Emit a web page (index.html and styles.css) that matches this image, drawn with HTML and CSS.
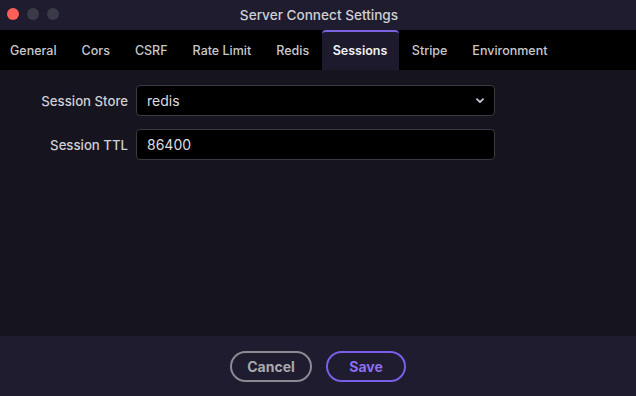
FILE: index.html
```html
<!DOCTYPE html>
<html>
<head>
<meta charset="utf-8">
<link rel="stylesheet" href="styles.css">
</head>
<body>
<div class="window">
  <div class="titlebar">
    <div class="lights">
      <span class="light red"></span>
      <span class="light grey"></span>
      <span class="light grey"></span>
    </div>
    <div class="title">Server Connect Settings</div>
  </div>
  <div class="tabs">
    <div class="tab">General</div>
    <div class="tab">Cors</div>
    <div class="tab">CSRF</div>
    <div class="tab">Rate Limit</div>
    <div class="tab">Redis</div>
    <div class="tab active">Sessions</div>
    <div class="tab">Stripe</div>
    <div class="tab">Environment</div>
  </div>
  <div class="content">
    <div class="form">
      <label class="label">Session Store</label>
      <div class="field select">
        <span>redis</span>
        <svg class="chev" width="8" height="6" viewBox="0 0 8 6"><path d="M1 1.2 L4 4.2 L7 1.2" fill="none" stroke="#c9cbe0" stroke-width="1.7" stroke-linecap="round" stroke-linejoin="round"/></svg>
      </div>
      <label class="label">Session TTL</label>
      <div class="field"><span>86400</span></div>
    </div>
  </div>
  <div class="footer">
    <button class="btn cancel">Cancel</button>
    <button class="btn save">Save</button>
  </div>
</div>
</body>
</html>
```
FILE: styles.css
```css
* { box-sizing: border-box; }
html, body { margin: 0; padding: 0; }
body {
  width: 636px;
  height: 396px;
  overflow: hidden;
  background: #15141f;
  font-family: Inter, "Noto Sans", sans-serif;
}
.window {
  display: flex;
  flex-direction: column;
  height: 396px;
}
.titlebar {
  height: 30px;
  background: #1e1c2e;
  position: relative;
  display: flex;
  align-items: center;
  justify-content: center;
}
.lights {
  position: absolute;
  left: 7px;
  top: 8px;
  display: flex;
  gap: 8px;
}
.light {
  width: 12px;
  height: 12px;
  border-radius: 50%;
  display: block;
}
.light.red { background: #fe5f57; }
.light.grey { background: #3b3a48; }
.title {
  color: #cfcfd4;
  font-size: 13.6px;
  font-weight: 500;
  margin-left: 2px;
}
.tabs {
  height: 40px;
  background: #000;
  display: flex;
  align-items: stretch;
  padding-left: 0;
}
.tab {
  color: #c8c8cc;
  font-size: 12.5px;
  font-weight: 500;
  padding: 0 12.5px 2px;
  display: flex;
  align-items: center;
  border-top: 2px solid transparent;
  border-radius: 4px 4px 0 0;
}
.tab:first-child { padding-left: 10px; }
.tab.active {
  background: #1c1a2c;
  border-top-color: #7a62e0;
  color: #f2f2f5;
  font-weight: 600;
  padding-left: 11px;
  padding-right: 12px;
}
.content {
  flex: 1;
  background: #15141f;
  padding: 15px 0 0 0;
}
.form {
  display: grid;
  grid-template-columns: 128px 359px;
  column-gap: 8px;
  row-gap: 13px;
  align-items: center;
}
.label {
  text-align: right;
  color: #cfcfd4;
  font-size: 13.2px;
  font-weight: 500;
}
.field {
  height: 31px;
  background: #000;
  border: 1px solid #3a3a42;
  border-radius: 4px;
  color: #dcdce0;
  font-size: 14px;
  display: flex;
  align-items: center;
  justify-content: space-between;
  padding: 0 9px 0 10px;
}
.chev { display: block; margin-right: 1px; }
.footer {
  height: 60px;
  background: #1e1c2e;
  display: flex;
  justify-content: center;
  align-items: center;
  gap: 14px;
}
.btn {
  height: 31px;
  border-radius: 16px;
  background: transparent;
  font-family: Inter, "Noto Sans", sans-serif;
  font-size: 14px;
  font-weight: 700;
  border: 2px solid;
  padding: 0;
}
.cancel {
  width: 82px;
  border-color: #8b8a92;
  color: #a9a8b0;
}
.save {
  width: 80px;
  border-color: #7b5ee8;
  color: #8c6ef2;
}
```
